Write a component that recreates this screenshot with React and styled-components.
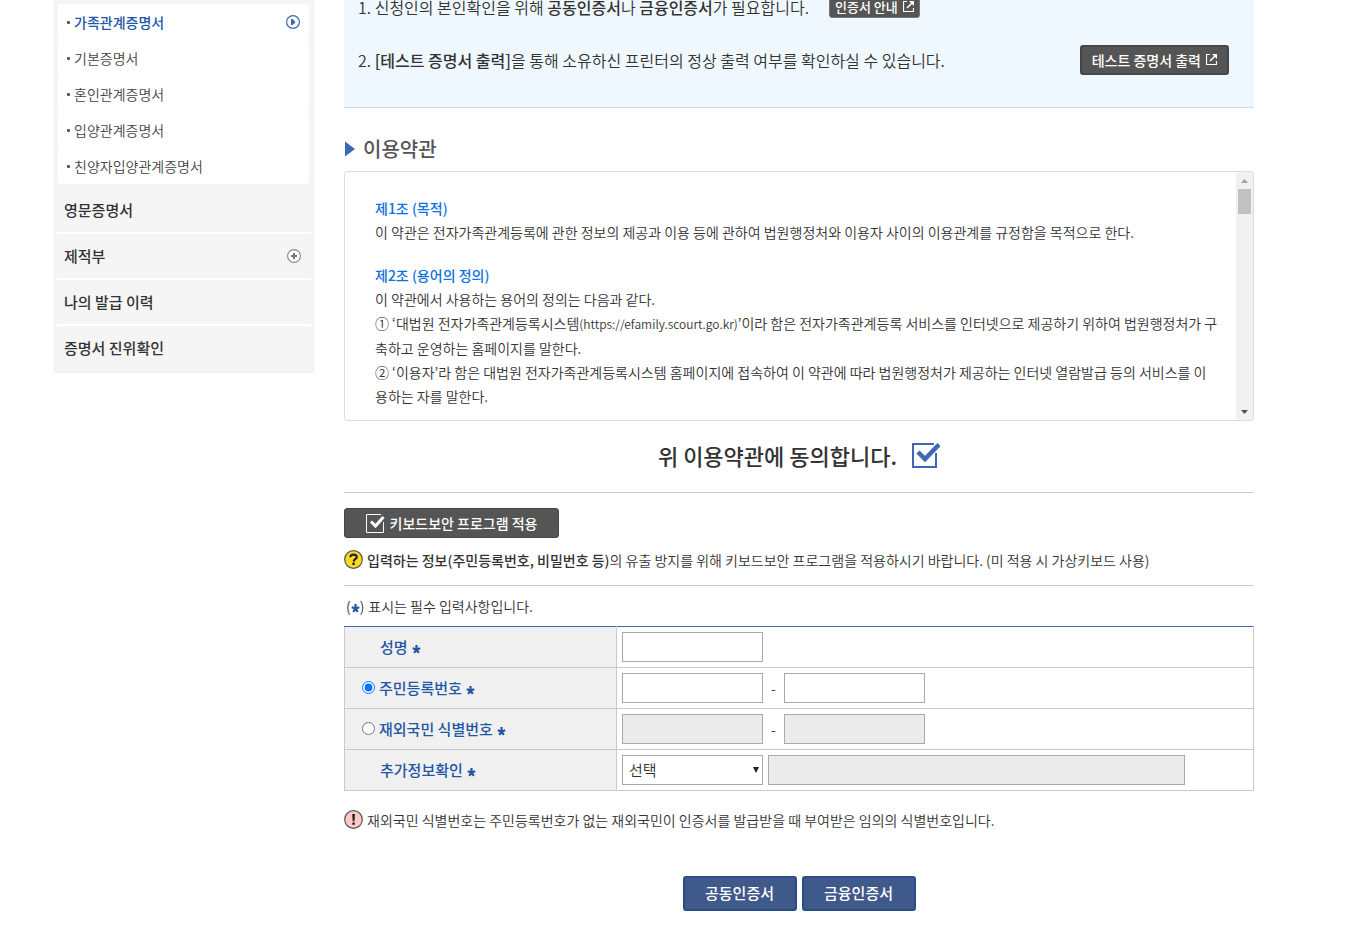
import React, { useState } from "react"
import styled, { createGlobalStyle } from "styled-components"

const navy = "#2356a5"
const blue = "#3b69b5"
const line = "#c9c9c9"
const text = "#333"

const GlobalStyle = createGlobalStyle`
  * {
    box-sizing: border-box;
  }
  body {
    margin: 0;
    background: #fff;
    color: ${text};
    font-family: "Noto Sans CJK KR", sans-serif;
    font-size: 14px;
    font-weight: 350;
    line-height: 24px;
  }
  button, input, select {
    font-family: inherit;
  }
`

const Page = styled.div`
  display: flex;
  align-items: flex-start;
  gap: 30px;
  padding: 0 107px 17px 54px;
`

const Sidebar = styled.nav`
  flex: 0 0 260px;
  background: #f5f5f5;
  border: 1px solid #efefef;
  border-top: 0;
  padding: 4px 2px 2px;
`

const SubMenu = styled.ul`
  list-style: none;
  margin: 0 2px 0 1px;
  padding: 0;
`

const SubLink = styled.a`
  display: flex;
  align-items: center;
  height: 36px;
  padding: 0 9px;
  border-radius: 3px;
  background: #fff;
  color: ${(p) => (p.$active ? navy : "#444")};
  font-weight: ${(p) => (p.$active ? 500 : 350)};
  text-decoration: none;

  &::before {
    content: "";
    width: 3px;
    height: 3px;
    margin-right: 4px;
    border-radius: 1px;
    background: #555;
  }
  svg {
    margin-left: auto;
  }
`

const MainMenu = styled.ul`
  list-style: none;
  margin: 0;
  padding: 4px 0 0;
`

const MainItem = styled.li`
  & + & {
    border-top: 2px solid #fff;
  }
`

const MainLink = styled.a`
  display: flex;
  align-items: center;
  justify-content: space-between;
  height: 44px;
  padding: 0 10px 0 7px;
  color: ${text};
  font-size: 15px;
  font-weight: 500;
  text-decoration: none;
`

const Main = styled.main`
  flex: 1;
  min-width: 0;
`

const Info = styled.ol`
  display: flex;
  flex-direction: column;
  gap: 23px;
  list-style: none;
  margin: -8px 0 0;
  padding: 0 25px 32px 14px;
  background: #f0f8ff;
  border-bottom: 1px solid #c9dbe8;
  font-size: 16px;
`

const InfoRow = styled.li`
  display: flex;
  align-items: center;
  justify-content: ${(p) => (p.$spread ? "space-between" : "flex-start")};
  gap: 20px;
  min-height: 30px;
`

const Strong = styled.strong`
  font-weight: 500;
`

const DarkButton = styled.button`
  display: inline-flex;
  align-items: center;
  justify-content: center;
  gap: 5px;
  height: ${(p) => (p.$small ? 22 : 30)}px;
  padding: 0 ${(p) => (p.$small ? 5 : 10)}px;
  border: ${(p) => (p.$small ? "1px solid #777" : "2px solid #464646")};
  border-radius: 3px;
  background: #555;
  color: #fff;
  font-size: ${(p) => (p.$small ? 13 : 14)}px;
  font-weight: 500;
  line-height: 20px;
  white-space: nowrap;
`

const KeyboardButton = styled(DarkButton)`
  min-width: 215px;
  border-width: 1px;
`

const Heading = styled.h2`
  display: flex;
  align-items: center;
  gap: 8px;
  margin: 29px 0 10px;
  color: #555;
  font-size: 20px;
  font-weight: 500;
  line-height: 24px;
`

const Terms = styled.section`
  display: flex;
  height: 250px;
  border: 1px solid #ddd;
  border-radius: 3px;
  overflow: hidden;
`

const TermsText = styled.div`
  flex: 1;
  min-width: 0;
  padding: 24px 12px 0 30px;
`

const TermsTitle = styled.h3`
  margin: 0;
  color: #0c71e0;
  font-size: 14px;
  font-weight: 500;
`

const TermsBody = styled.p`
  margin: 0 0 19px;
  white-space: nowrap;
`

const SiteUrl = styled.span`
  font-size: 12px;
`

const ScrollTrack = styled.div`
  display: flex;
  flex-direction: column;
  align-items: center;
  flex: 0 0 17px;
  background: #f1f1f1;

  svg:last-child {
    margin-top: auto;
  }
`

const ScrollThumb = styled.div`
  width: 13px;
  height: 25px;
  background: #c1c1c1;
`

const Agree = styled.label`
  display: flex;
  align-items: center;
  justify-content: center;
  gap: 15px;
  height: 72px;
  padding-bottom: 3px;
  border-bottom: 1px solid ${line};
  font-size: 22px;
  font-weight: 500;
`

const CheckWrap = styled.span`
  display: grid;
  width: 28px;
  height: 28px;

  > * {
    grid-area: 1 / 1;
  }
`

const HiddenCheck = styled.input`
  appearance: none;
  width: 28px;
  height: 28px;
  margin: 0;
`

const Keyboard = styled.section`
  padding: 15px 0 13px;
  border-bottom: 1px solid ${line};
`

const Notice = styled.p`
  display: flex;
  align-items: center;
  gap: 4px;
  margin: ${(p) => p.$top}px 0 0;
`

const Required = styled.p`
  display: flex;
  align-items: center;
  margin: 8px 0;
  padding-left: 2px;

  span {
    margin-left: 4px;
  }
`

const Table = styled.table`
  width: 100%;
  border-collapse: collapse;
  table-layout: fixed;
`

const HeadCell = styled.th`
  width: 272px;
  height: 41px;
  padding: 0 0 0 17px;
  border: 1px solid ${line};
  background: #f0f0f0;
  color: ${navy};
  font-size: 15px;
  font-weight: 500;
  text-align: left;

  tr:first-child & {
    border-top-color: ${blue};
  }
`

const Cell = styled.td`
  padding: 0 5px;
  border: 1px solid ${line};

  tr:first-child & {
    border-top-color: ${blue};
  }
`

const FieldLabel = styled.label`
  display: flex;
  align-items: center;
  gap: 4px;
  padding-left: ${(p) => (p.$indent ? 18 : 0)}px;
`

const Radio = styled.input`
  width: 13px;
  height: 13px;
  margin: 0;
`

const Fields = styled.div`
  display: flex;
  align-items: center;
  gap: ${(p) => p.$gap || 8}px;
`

const TextInput = styled.input`
  width: ${(p) => (p.$wide ? 417 : 141)}px;
  height: 30px;
  padding: 0 6px;
  border: 1px solid #a9a9a9;
  border-radius: 0;
  background: #fff;
  font-size: 14px;

  &:disabled {
    background: #ebebeb;
  }
`

const SelectWrap = styled.div`
  display: grid;
  align-items: center;
  width: 141px;

  > * {
    grid-area: 1 / 1;
  }
  svg {
    justify-self: end;
    margin-right: 3px;
    pointer-events: none;
  }
`

const Select = styled.select`
  appearance: none;
  width: 100%;
  height: 30px;
  padding: 0 6px;
  border: 1px solid #a9a9a9;
  border-radius: 0;
  background: #fff;
  color: ${text};
  font-size: 15px;
  font-weight: 350;
`

const Actions = styled.div`
  display: flex;
  justify-content: center;
  gap: 5px;
  margin-top: 44px;
`

const PrimaryButton = styled.button`
  width: 114px;
  height: 35px;
  padding: 0 0 2px;
  border: 2px solid #2a4c87;
  border-radius: 3px;
  background: #40598b;
  color: #fff;
  font-size: 15px;
  font-weight: 500;
`

const ExternalIcon = () => (
  <svg width="11" height="12" viewBox="0 0 11 12" fill="none" stroke="#fff" aria-hidden="true">
    <path d="M4 .5H.5v10h10V7" strokeWidth="1.2" />
    <path d="M4 7l5-5" strokeWidth="1.6" />
    <path d="M6 0h5v5z" fill="#fff" stroke="none" />
  </svg>
)

const PlayIcon = () => (
  <svg width="14" height="14" viewBox="0 0 14 14" aria-hidden="true">
    <circle cx="7" cy="7" r="6.400" fill="#fff" stroke={blue} strokeWidth="1.2" />
    <path d="M5 4h1.500L9 6.200v1.600L6.500 10H5z" fill={blue} />
  </svg>
)

const PlusIcon = () => (
  <svg width="14" height="14" viewBox="0 0 14 14" aria-hidden="true">
    <circle cx="7" cy="7" r="6.400" fill="#fff" stroke="#888" strokeWidth="1.1" />
    <path d="M7 4v6M4 7h6" stroke="#777" strokeWidth="2" />
  </svg>
)

const Triangle = () => (
  <svg width="11" height="16" viewBox="0 0 11 16" aria-hidden="true">
    <path d="M1 .5l10 7.500-10 7.500z" fill={blue} />
  </svg>
)

const Star = () => (
  <svg width="9" height="14" viewBox="0 0 9 14" fill="none" stroke={navy} strokeWidth="2.200" aria-label="필수">
    <path d="M4.500 9.500V5M4.500 9.500L.7 8.200M4.500 9.500l3.800-1.300M4.500 9.500l-2.300 3.300M4.500 9.500l2.300 3.300" />
  </svg>
)

const QuestionIcon = () => (
  <svg width="19" height="19" viewBox="0 0 19 19" fill="none" aria-hidden="true">
    <circle cx="9.500" cy="9.500" r="8.800" fill="#ffd91f" stroke="#555" strokeWidth="1.2" />
    <path d="M6.300 7.200c0-3.500 6.400-3.300 6.400 0 0 2-3 2-3 4.200" stroke="#222" strokeWidth="2.200" />
    <path d="M8.400 12.600h2.400V15H8.400z" fill="#222" />
  </svg>
)

const AlertIcon = () => (
  <svg width="19" height="19" viewBox="0 0 19 19" aria-hidden="true">
    <circle cx="9.500" cy="9.500" r="8.800" fill="#ffc9c5" stroke="#555" strokeWidth="1.2" />
    <path d="M8.200 4h2.800l-.5 7.200H8.700zM8.300 12.400h2.500v2.400H8.300z" fill="#222" />
  </svg>
)

const CheckIcon = ({ checked }) => (
  <svg width="28" height="28" viewBox="0 0 28 28" fill="none" stroke={blue} aria-hidden="true">
    <path d={checked ? "M22 3H1v23h23V12" : "M1 3h23v23H1z"} strokeWidth="2" />
    {checked && <path d="M6 11l7 7L27 3.500" strokeWidth="4.500" />}
  </svg>
)

const SmallCheckIcon = () => (
  <svg width="19" height="19" viewBox="0 0 19 19" fill="none" stroke="#fff" aria-hidden="true">
    <path d="M15 .5H.5v18h17V8" />
    <path d="M5 7.500l4.500 4.500 8-9" strokeWidth="3" />
  </svg>
)

const Arrow = ({ up }) => (
  <svg width="17" height="17" viewBox="0 0 17 17" aria-hidden="true">
    <path d={up ? "M5 11l3.500-4 3.500 4z" : "M5 7l3.500 4L12 7z"} fill={up ? "#a3a3a3" : "#505050"} />
  </svg>
)

const SelectArrow = () => (
  <svg width="8" height="6" viewBox="0 0 8 6" aria-hidden="true">
    <path d="M1 0h6L4 6z" fill="#222" />
  </svg>
)

const certificates = [
  "가족관계증명서",
  "기본증명서",
  "혼인관계증명서",
  "입양관계증명서",
  "친양자입양관계증명서",
]

const menus = ["영문증명서", "제적부", "나의 발급 이력", "증명서 진위확인"]

export default function App() {
  const [agreed, setAgreed] = useState(true)
  const [idType, setIdType] = useState("resident")
  const overseas = idType === "overseas"

  return (
    <>
      <GlobalStyle />
      <Page>
        <Sidebar>
          <SubMenu>
            {certificates.map((name, i) => (
              <li key={name}>
                <SubLink href="#" $active={i === 0}>
                  {name}
                  {i === 0 && <PlayIcon />}
                </SubLink>
              </li>
            ))}
          </SubMenu>
          <MainMenu>
            {menus.map((name) => (
              <MainItem key={name}>
                <MainLink href="#">
                  {name}
                  {name === "제적부" && <PlusIcon />}
                </MainLink>
              </MainItem>
            ))}
          </MainMenu>
        </Sidebar>

        <Main>
          <Info>
            <InfoRow>
              <span>
                1. 신청인의 본인확인을 위해 <Strong>공동인증서</Strong>나 <Strong>금융인증서</Strong>가 필요합니다.
              </span>
              <DarkButton type="button" $small>
                인증서 안내
                <ExternalIcon />
              </DarkButton>
            </InfoRow>
            <InfoRow $spread>
              <span>
                2. <Strong>[테스트 증명서 출력]</Strong>을 통해 소유하신 프린터의 정상 출력 여부를 확인하실 수 있습니다.
              </span>
              <DarkButton type="button">
                테스트 증명서 출력
                <ExternalIcon />
              </DarkButton>
            </InfoRow>
          </Info>

          <Heading>
            <Triangle />
            이용약관
          </Heading>
          <Terms>
            <TermsText>
              <TermsTitle>제1조 (목적)</TermsTitle>
              <TermsBody>
                이 약관은 전자가족관계등록에 관한 정보의 제공과 이용 등에 관하여 법원행정처와 이용자 사이의 이용관계를 규정함을 목적으로 한다.
              </TermsBody>
              <TermsTitle>제2조 (용어의 정의)</TermsTitle>
              <TermsBody>
                이 약관에서 사용하는 용어의 정의는 다음과 같다.
                <br />
                ① ‘대법원 전자가족관계등록시스템<SiteUrl>(https://efamily.scourt.go.kr)</SiteUrl>’이라 함은 전자가족관계등록 서비스를 인터넷으로 제공하기 위하여 법원행정처가 구
                <br />
                축하고 운영하는 홈페이지를 말한다.
                <br />
                ② ‘이용자’라 함은 대법원 전자가족관계등록시스템 홈페이지에 접속하여 이 약관에 따라 법원행정처가 제공하는 인터넷 열람발급 등의 서비스를 이
                <br />
                용하는 자를 말한다.
              </TermsBody>
            </TermsText>
            <ScrollTrack>
              <Arrow up />
              <ScrollThumb />
              <Arrow />
            </ScrollTrack>
          </Terms>

          <Agree>
            위 이용약관에 동의합니다.
            <CheckWrap>
              <HiddenCheck type="checkbox" checked={agreed} onChange={(e) => setAgreed(e.target.checked)} />
              <CheckIcon checked={agreed} />
            </CheckWrap>
          </Agree>

          <Keyboard>
            <KeyboardButton type="button">
              <SmallCheckIcon />
              키보드보안 프로그램 적용
            </KeyboardButton>
            <Notice $top={9}>
              <QuestionIcon />
              <span>
                <Strong>입력하는 정보(주민등록번호, 비밀번호 등)</Strong>의 유출 방지를 위해 키보드보안 프로그램을 적용하시기 바랍니다. (미 적용 시 가상키보드 사용)
              </span>
            </Notice>
          </Keyboard>

          <Required>
            (<Star />)<span>표시는 필수 입력사항입니다.</span>
          </Required>
          <Table>
            <tbody>
              <tr>
                <HeadCell scope="row">
                  <FieldLabel htmlFor="name" $indent>
                    성명 <Star />
                  </FieldLabel>
                </HeadCell>
                <Cell>
                  <Fields>
                    <TextInput id="name" type="text" />
                  </Fields>
                </Cell>
              </tr>
              <tr>
                <HeadCell scope="row">
                  <FieldLabel>
                    <Radio type="radio" name="idType" checked={!overseas} onChange={() => setIdType("resident")} />
                    주민등록번호 <Star />
                  </FieldLabel>
                </HeadCell>
                <Cell>
                  <Fields>
                    <TextInput type="text" aria-label="주민등록번호 앞자리" disabled={overseas} />
                    -
                    <TextInput type="password" aria-label="주민등록번호 뒷자리" disabled={overseas} />
                  </Fields>
                </Cell>
              </tr>
              <tr>
                <HeadCell scope="row">
                  <FieldLabel>
                    <Radio type="radio" name="idType" checked={overseas} onChange={() => setIdType("overseas")} />
                    재외국민 식별번호 <Star />
                  </FieldLabel>
                </HeadCell>
                <Cell>
                  <Fields>
                    <TextInput type="text" aria-label="재외국민 식별번호 앞자리" disabled={!overseas} />
                    -
                    <TextInput type="password" aria-label="재외국민 식별번호 뒷자리" disabled={!overseas} />
                  </Fields>
                </Cell>
              </tr>
              <tr>
                <HeadCell scope="row">
                  <FieldLabel htmlFor="extra" $indent>
                    추가정보확인 <Star />
                  </FieldLabel>
                </HeadCell>
                <Cell>
                  <Fields $gap={5}>
                    <SelectWrap>
                      <Select id="extra">
                        <option>선택</option>
                      </Select>
                      <SelectArrow />
                    </SelectWrap>
                    <TextInput type="text" aria-label="추가정보" $wide disabled />
                  </Fields>
                </Cell>
              </tr>
            </tbody>
          </Table>
          <Notice $top={17}>
            <AlertIcon />
            재외국민 식별번호는 주민등록번호가 없는 재외국민이 인증서를 발급받을 때 부여받은 임의의 식별번호입니다.
          </Notice>

          <Actions>
            <PrimaryButton type="button">공동인증서</PrimaryButton>
            <PrimaryButton type="button">금융인증서</PrimaryButton>
          </Actions>
        </Main>
      </Page>
    </>
  )
}
